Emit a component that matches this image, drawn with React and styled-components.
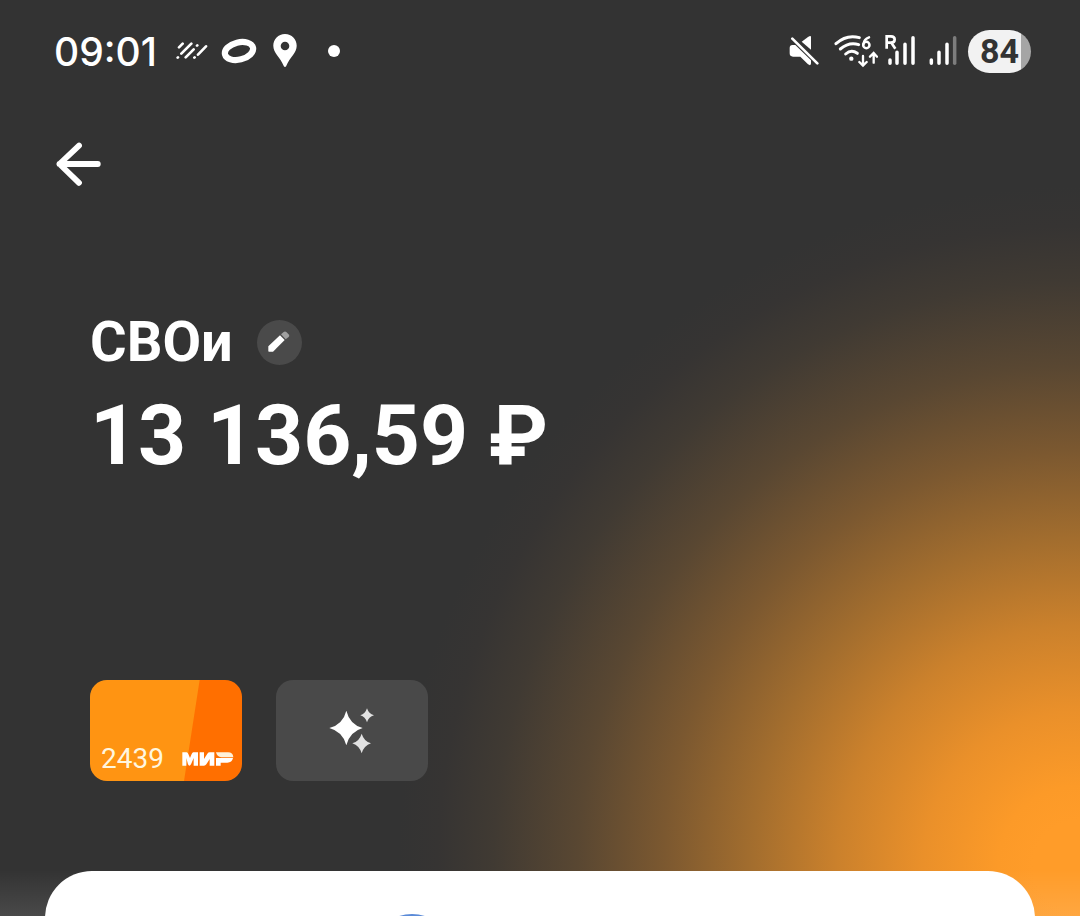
import React from "react";
import styled, { createGlobalStyle } from "styled-components";

const GlobalStyle = createGlobalStyle`
    * {
        box-sizing: border-box;
    }

    body {
        margin: 0;
        background: #333333;
    }
`;

const StripesIcon = () => (
    <svg width="32" height="20" viewBox="408 68 96 60">
        <path
            d="M428 76L417 87M454 76L424 106M461 93L437 117M472 81L471 82M498 84L474 109M414 117L413 118M464 117L463 118"
            stroke="#fff"
            strokeWidth="8"
            strokeLinecap="round"
        />
    </svg>
);

const RingIcon = () => (
    <svg width="38" height="28" viewBox="0 0 38 28">
        <ellipse
            cx="19"
            cy="14"
            rx="14.4"
            ry="8.6"
            fill="none"
            stroke="#fff"
            strokeWidth="6.2"
            transform="rotate(-14 19 14)"
        />
    </svg>
);

const PinIcon = () => (
    <svg width="24" height="34" viewBox="0 0 24 34">
        <path
            fill="#fff"
            fillRule="evenodd"
            d="M12 0C5.2 0 .3 5.2.3 11.8.3 19 7 23 10.9 32.2c.5 1.1 1.7 1.1 2.2 0C17 23 23.7 19 23.7 11.8 23.7 5.2 18.8 0 12 0zm0 7.7a4.3 4.3 0 110 8.6 4.3 4.3 0 010-8.6z"
        />
    </svg>
);

const MuteIcon = () => (
    <svg width="30" height="32" viewBox="28 46 90 96">
        <path fill="#fff" d="M94 52V90L66 66L85 52Q94 46 94 52Z" />
        <path fill="#fff" d="M38 76H47L94 122V131Q94 140 85 134L62 111H40Q30 111 30 101V85Q30 76 38 76Z" />
        <path d="M38 57L113 131" stroke="#fff" strokeWidth="8" strokeLinecap="round" />
    </svg>
);

const WifiIcon = () => (
    <svg width="44" height="34" viewBox="162 43 132 102">
        <g fill="none" stroke="#fff" strokeWidth="9" strokeLinecap="round">
            <path d="M168 72Q200 43 238 54" />
            <path d="M181 88Q207 66 236 75" />
            <path d="M197 103Q214 88 232 101" />
            <path d="M249 109V137M238 127L249 138L260 127M281 129V101M270 111L281 100L291 111" strokeWidth="7" />
            <circle cx="259" cy="76" r="9.5" strokeWidth="7.5" />
            <path d="M250 74Q252 58 267 53" strokeWidth="7.5" />
        </g>
        <circle cx="214" cy="117" r="6.5" fill="#fff" />
    </svg>
);

const RoamingIcon = () => (
    <svg width="30" height="34" viewBox="315 43 90 102">
        <g fill="none" stroke="#fff">
            <path d="M320 87V50H333Q344 50 344 59.5Q344 69 333 69H320M334 69L346 87" strokeWidth="8" />
            <path d="M330 121V131M351 98V131M375 74V131M399 54V131" strokeWidth="10.5" strokeLinecap="round" />
        </g>
    </svg>
);

const SignalIcon = () => (
    <svg width="28" height="34" viewBox="448 43 84 102">
        <g fill="none" stroke="#fff" strokeWidth="10.5" strokeLinecap="round">
            <path d="M455 121V131M478 98V131M502 74V131" />
            <path d="M525 54V131" stroke="#7d7d7d" />
        </g>
    </svg>
);

const ArrowIcon = () => (
    <svg width="46" height="46" viewBox="0 0 46 46">
        <path
            d="M23 4.6L3.5 23L23 41.8M3.5 23H41.8"
            fill="none"
            stroke="#fff"
            strokeWidth="5.8"
            strokeLinecap="round"
            strokeLinejoin="round"
        />
    </svg>
);

const PencilIcon = () => (
    <svg width="22" height="22" viewBox="0 0 66 66">
        <path fill="#fff" d="M1 46L36 13L50 27L15 62H3Q1 62 1 60Z" />
        <path fill="#a0a0a0" d="M39 10L47 3Q51 0 55 3L63 11Q65 15 62 18L53 25Z" />
    </svg>
);

const MirLogo = () => (
    <svg width="52" height="16" viewBox="308 243 156 48">
        <g fill="#fff">
            <path d="M309 247H322Q325 247 327 252L332 264L337 252Q339 247 342 247H356V287H343V264L335 283Q333 287 330 287Q328 287 326 283L321 264V287H309Z" />
            <path d="M361 247H374V267L384 251Q387 247 391 247H405V287H391V267L381 283Q378 287 374 287H361Z" />
            <path d="M410 264H461Q458 278 444 278H424V287H410Z" />
            <path d="M410 247H446Q461 247 462 262H426Q413 260 410 247Z" fill="#fff1d8" />
        </g>
    </svg>
);

const SparklesIcon = () => (
    <svg width="46" height="46" viewBox="176 114 138 138">
        <path fill="#fff" d="M228 122Q238 163 277 174Q238 185 228 226Q218 185 177 174Q218 163 228 122Z" />
        <path fill="#e2e2e2" d="M290 115Q295 131 311 136Q295 141 290 157Q285 141 270 136Q285 131 290 115Z" />
        <path fill="#e2e2e2" d="M274 191Q281 214 302 220Q281 227 274 250Q267 227 246 220Q267 214 274 191Z" />
    </svg>
);

const App = () => (
    <>
        <GlobalStyle />
        <Screen>
            <StatusBar>
                <StatusGroup>
                    <Clock>09:01</Clock>
                    <StatusItem $gap={20}>
                        <StripesIcon />
                    </StatusItem>
                    <StatusItem $gap={12}>
                        <RingIcon />
                    </StatusItem>
                    <StatusItem $gap={15}>
                        <PinIcon />
                    </StatusItem>
                    <Dot />
                </StatusGroup>
                <StatusGroup>
                    <MuteIcon />
                    <StatusItem $gap={15}>
                        <WifiIcon />
                    </StatusItem>
                    <StatusItem $gap={7}>
                        <RoamingIcon />
                    </StatusItem>
                    <StatusItem $gap={14}>
                        <SignalIcon />
                    </StatusItem>
                    <Battery>84</Battery>
                </StatusGroup>
            </StatusBar>
            <BackButton aria-label="Назад">
                <ArrowIcon />
            </BackButton>
            <Account>
                <TitleRow>
                    <Title>СВОи</Title>
                    <EditButton aria-label="Изменить">
                        <PencilIcon />
                    </EditButton>
                </TitleRow>
                <Balance>13 136,59 ₽</Balance>
                <Cards>
                    <BankCard>
                        <CardNumber>2439</CardNumber>
                        <MirLogo />
                    </BankCard>
                    <ExtraCard>
                        <SparklesIcon />
                    </ExtraCard>
                </Cards>
            </Account>
            <Sheet>
                <ActionCircle />
            </Sheet>
        </Screen>
    </>
);

const Screen = styled.main`
    width: 1080px;
    height: 916px;
    overflow: hidden;
    display: flex;
    flex-direction: column;
    color: #ffffff;
    font-family: Roboto, "Liberation Sans", sans-serif;
    background:
        linear-gradient(to top, rgba(255, 255, 255, 0.11), rgba(255, 255, 255, 0) 46px),
        radial-gradient(
            circle 680px at 1078px 866px,
            #ff9c29 45px,
            #fc9a28 80px,
            #ea902a 155px,
            #cb812c 240px,
            #a26d2e 328px,
            #7b5830 415px,
            #594732 500px,
            #403a33 585px,
            #363433 640px,
            #333333 680px
        );

    > * {
        flex-shrink: 0;
    }
`;

const StatusBar = styled.header`
    height: 104px;
    padding: 0 49px 2px 54px;
    display: flex;
    align-items: center;
    justify-content: space-between;
`;

const StatusGroup = styled.div`
    display: flex;
    align-items: center;

    svg {
        display: block;
    }
`;

const StatusItem = styled.div`
    margin-left: ${props => props.$gap}px;
`;

const Clock = styled.span`
    width: 102px;
    padding-top: 1px;
    font-family: Inter, sans-serif;
    font-size: 39px;
    font-weight: 500;
    line-height: 44px;
    white-space: nowrap;
`;

const Dot = styled.span`
    width: 12px;
    height: 12px;
    margin-left: 31px;
    border-radius: 50%;
    background: #ffffff;
`;

const Battery = styled.div`
    width: 63px;
    height: 43px;
    margin-left: 11px;
    display: flex;
    align-items: center;
    justify-content: center;
    border-radius: 22px;
    background: linear-gradient(to right, #f2f2f2 53px, #a5a5a5 53px);
    color: #333333;
    font-size: 34px;
    font-weight: 700;
`;

const BackButton = styled.button`
    width: 46px;
    height: 46px;
    margin: 37px 0 0 56px;
    padding: 0;
    border: 0;
    background: none;
`;

const Account = styled.section`
    height: 684px;
    padding: 122px 90px 0;
`;

const TitleRow = styled.div`
    height: 66px;
    display: flex;
    align-items: center;
    gap: 24px;
`;

const Title = styled.h1`
    margin: 0;
    font-size: 56px;
    font-weight: 700;
    line-height: 66px;
`;

const EditButton = styled.button`
    width: 45px;
    height: 45px;
    padding: 0;
    display: flex;
    align-items: center;
    justify-content: center;
    border: 0;
    border-radius: 50%;
    background: #4a4a4a;
`;

const Balance = styled.div`
    height: 100px;
    margin-top: 11px;
    font-size: 84px;
    font-weight: 700;
    letter-spacing: -0.1px;
    line-height: 100px;
    white-space: nowrap;
`;

const Cards = styled.div`
    margin-top: 194px;
    display: flex;
    gap: 34px;
`;

const CardBase = styled.div`
    width: 152px;
    height: 101px;
    display: flex;
    border-radius: 17px;
`;

const BankCard = styled(CardBase)`
    padding: 0 8px 6px 11px;
    align-items: flex-end;
    justify-content: space-between;
    background: linear-gradient(98.8deg, #ff9412 65.1%, #ff6f00 65.7%);

    svg {
        margin-bottom: 8px;
    }
`;

const CardNumber = styled.span`
    font-size: 28px;
    line-height: 33px;
    color: #fff6df;
`;

const ExtraCard = styled(CardBase)`
    align-items: center;
    justify-content: center;
    background: #494949;
`;

const Sheet = styled.section`
    height: 100px;
    margin: 0 45px;
    padding-top: 43px;
    border-radius: 47px 47px 0 0;
    background: #ffffff;
`;

const ActionCircle = styled.div`
    width: 84px;
    height: 84px;
    margin-left: 325px;
    border-radius: 50%;
    background: #5b8bd8;
`;

export default App;
